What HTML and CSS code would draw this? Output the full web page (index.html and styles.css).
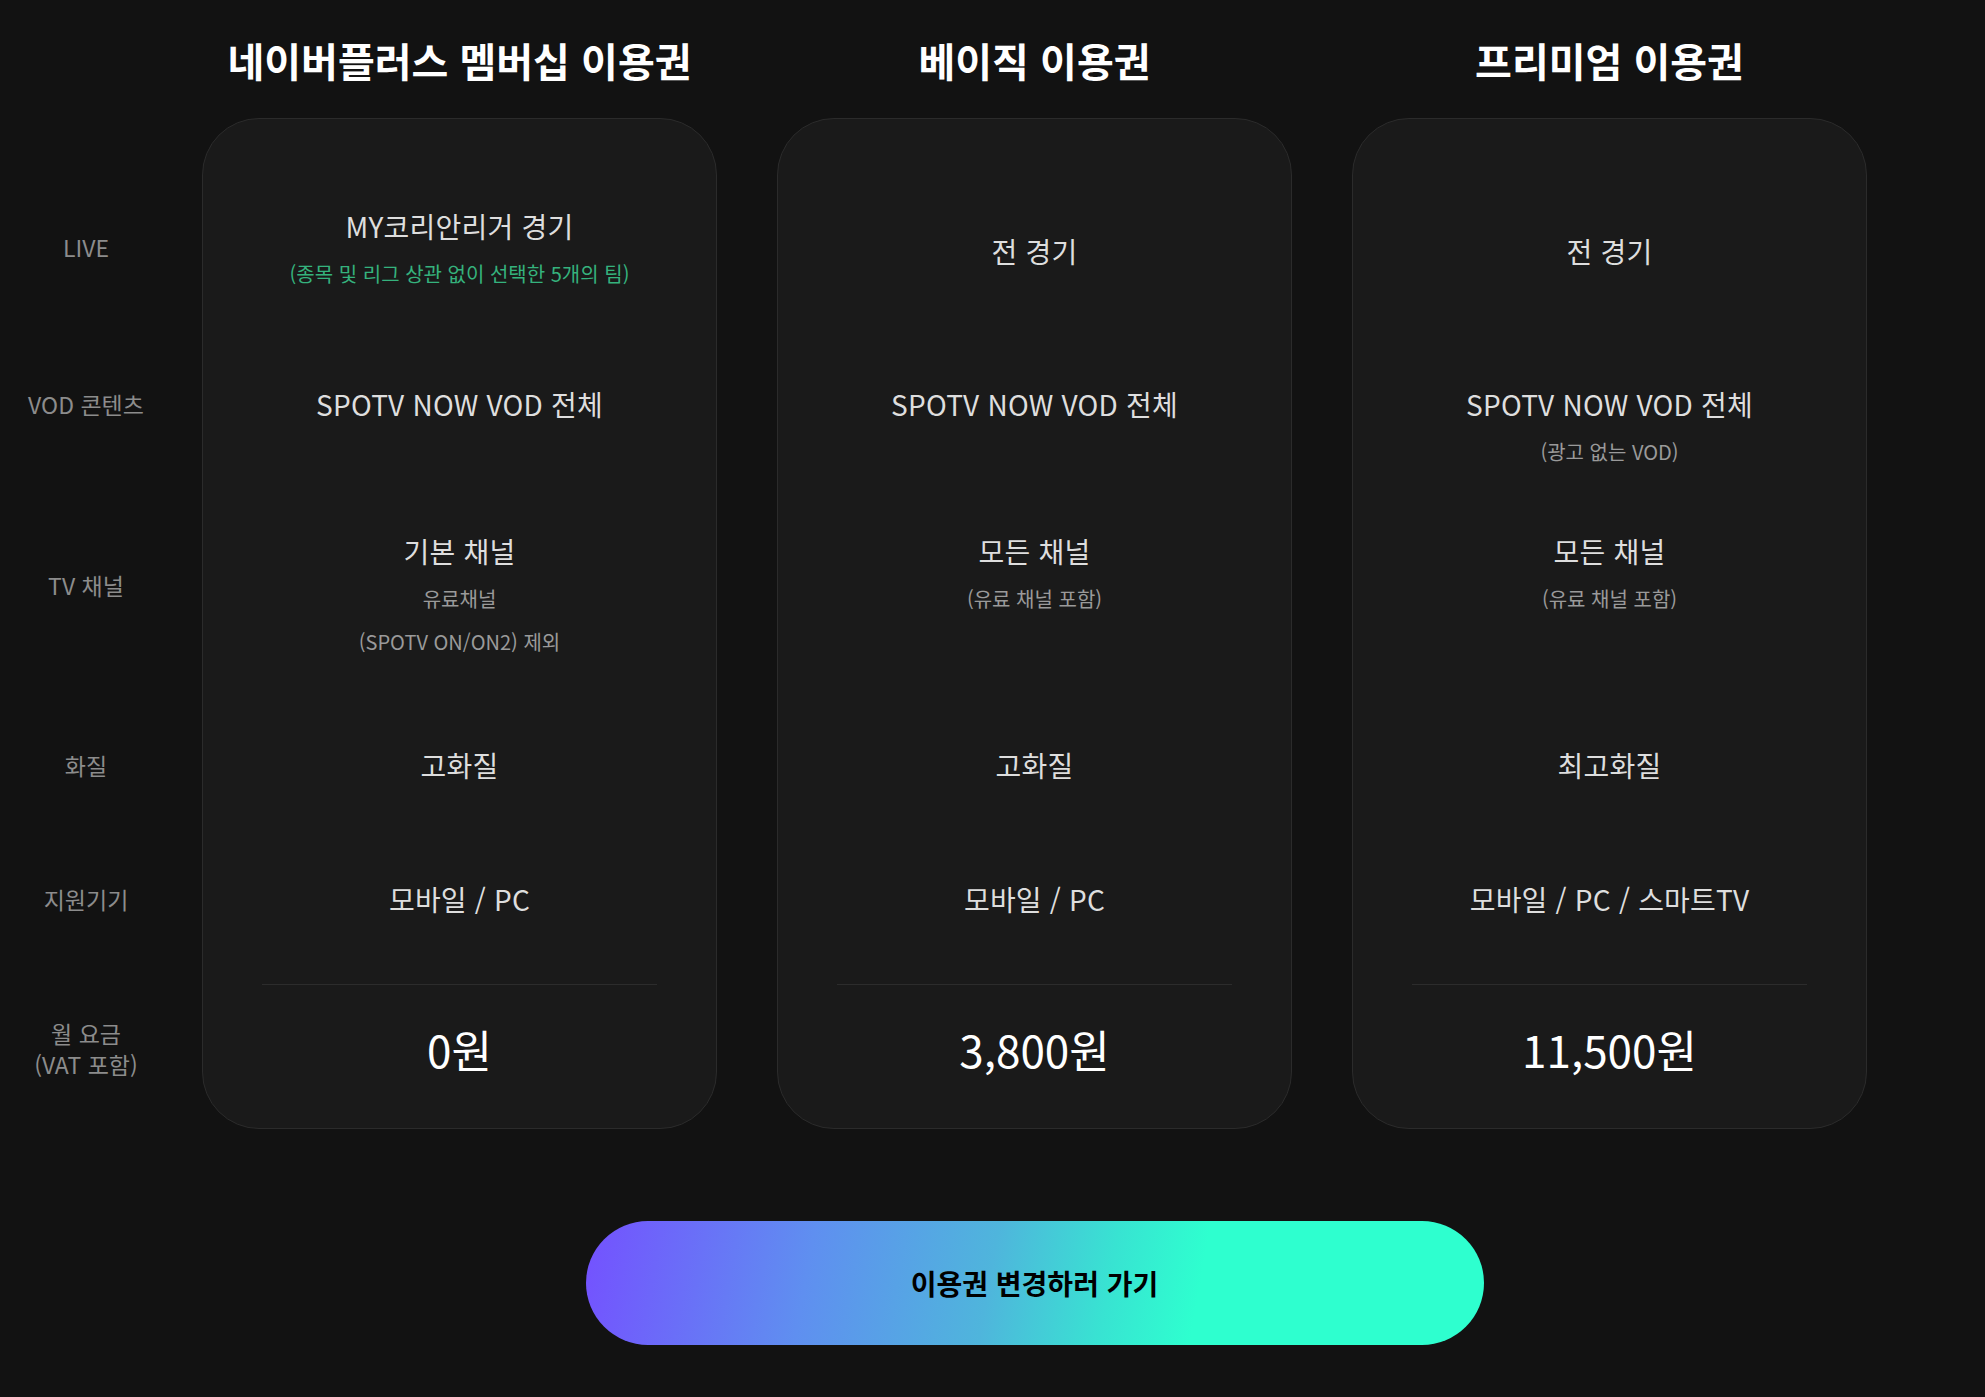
FILE: index.html
```html
<!DOCTYPE html>
<html lang="ko">
<head>
    <meta charset="UTF-8">
    <meta name="viewport" content="width=device-width, initial-scale=1.0">
    <title>이용권 비교</title>
    <link rel="stylesheet" href="styles.css">
</head>
<body>
    <div class="page">
        <div class="compare">
            <!-- 항목 이름 -->
            <div class="labels">
                <div class="row row-live">LIVE</div>
                <div class="row row-vod">VOD 콘텐츠</div>
                <div class="row row-tv">TV 채널</div>
                <div class="row row-quality">화질</div>
                <div class="row row-device">지원기기</div>
                <div class="divider-space"></div>
                <div class="row row-price price-label">월 요금<br>(VAT 포함)</div>
            </div>

            <div class="plans">
                <div class="plan">
                    <h2 class="plan-title">네이버플러스 멤버십 이용권</h2>
                    <div class="card">
                        <div class="cell row-live">
                            <p class="main">MY코리안리거 경기</p>
                            <p class="sub green">(종목 및 리그 상관 없이 선택한 5개의 팀)</p>
                        </div>
                        <div class="cell top row-vod">
                            <p class="main">SPOTV NOW VOD 전체</p>
                        </div>
                        <div class="cell top row-tv">
                            <p class="main">기본 채널</p>
                            <p class="sub">유료채널</p>
                            <p class="sub">(SPOTV ON/ON2) 제외</p>
                        </div>
                        <div class="cell row-quality">
                            <p class="main">고화질</p>
                        </div>
                        <div class="cell row-device">
                            <p class="main">모바일 / PC</p>
                        </div>
                        <div class="divider"></div>
                        <div class="cell row-price">
                            <p class="price">0원</p>
                        </div>
                    </div>
                </div>

                <div class="plan">
                    <h2 class="plan-title">베이직 이용권</h2>
                    <div class="card">
                        <div class="cell row-live">
                            <p class="main single">전 경기</p>
                        </div>
                        <div class="cell top row-vod">
                            <p class="main">SPOTV NOW VOD 전체</p>
                        </div>
                        <div class="cell top row-tv">
                            <p class="main">모든 채널</p>
                            <p class="sub">(유료 채널 포함)</p>
                        </div>
                        <div class="cell row-quality">
                            <p class="main">고화질</p>
                        </div>
                        <div class="cell row-device">
                            <p class="main">모바일 / PC</p>
                        </div>
                        <div class="divider"></div>
                        <div class="cell row-price">
                            <p class="price">3,800원</p>
                        </div>
                    </div>
                </div>

                <div class="plan">
                    <h2 class="plan-title">프리미엄 이용권</h2>
                    <div class="card">
                        <div class="cell row-live">
                            <p class="main single">전 경기</p>
                        </div>
                        <div class="cell top row-vod">
                            <p class="main">SPOTV NOW VOD 전체</p>
                            <p class="sub">(광고 없는 VOD)</p>
                        </div>
                        <div class="cell top row-tv">
                            <p class="main">모든 채널</p>
                            <p class="sub">(유료 채널 포함)</p>
                        </div>
                        <div class="cell row-quality">
                            <p class="main">최고화질</p>
                        </div>
                        <div class="cell row-device">
                            <p class="main">모바일 / PC / 스마트TV</p>
                        </div>
                        <div class="divider"></div>
                        <div class="cell row-price">
                            <p class="price">11,500원</p>
                        </div>
                    </div>
                </div>
            </div>
        </div>

        <div class="action">
            <button class="change-button">이용권 변경하러 가기</button>
        </div>
    </div>
</body>
</html>
```

FILE: styles.css
```css
* {
    margin: 0;
    padding: 0;
    box-sizing: border-box;
    font-family: "Noto Sans CJK KR", "Noto Sans", sans-serif;
}

body {
    background-color: #121212;
    color: #dcdcdc;
    min-height: 100vh;
}

.page {
    padding-top: 36px;
}

.compare {
    display: flex;
}

/* 왼쪽 항목 이름 */
.labels {
    width: 172px;
    margin-right: 30px;
    padding-top: 142px;
    display: flex;
    flex-direction: column;
    color: #8c8c8c;
    font-size: 23px;
    line-height: 29px;
}

.labels .row {
    display: flex;
    align-items: center;
    justify-content: center;
    text-align: center;
}

.labels .price-label {
    line-height: 31px;
}

.divider-space {
    height: 39px;
}

/* 공통 행 높이 */
.row-live { height: 138px; }
.row-vod { height: 176px; }
.row-tv { height: 186px; }
.row-quality { height: 174px; }
.row-device { height: 94px; }
.row-price { height: 128px; }

.plans {
    display: flex;
    gap: 60px;
}

.plan {
    width: 515px;
}

.plan-title {
    font-size: 40px;
    line-height: 49px;
    font-weight: 700;
    color: #fff;
    text-align: center;
    margin-bottom: 33px;
}

.card {
    background-color: #1a1a1a;
    border: 1px solid #2b2b2b;
    border-radius: 57px;
    padding: 59px 0 15px;
}

.cell {
    display: flex;
    flex-direction: column;
    align-items: center;
    justify-content: center;
    text-align: center;
}

.cell.top {
    justify-content: flex-start;
}

.row-vod.top {
    padding-top: 70px;
}

.row-tv.top {
    padding-top: 41px;
}

.main {
    font-size: 28px;
    line-height: 36px;
    color: #dedede;
    letter-spacing: 0.2px;
}

.main.single {
    margin-top: 8px;
}

.sub {
    font-size: 20px;
    line-height: 26px;
    margin-top: 17px;
    color: #9a9a9a;
}

.sub + .sub {
    margin-top: 17px;
}

.green {
    color: #35b27d;
}

.divider {
    height: 1px;
    margin: 38px 59px 0;
    background-color: #2c2c2c;
}

.price {
    font-size: 44px;
    line-height: 52px;
    color: #fff;
}

/* 하단 버튼 */
.action {
    margin-left: 202px;
    width: 1665px;
    display: flex;
    justify-content: center;
    padding-top: 92px;
}

.change-button {
    width: 898px;
    height: 124px;
    border: none;
    border-radius: 62px;
    background: linear-gradient(100deg, #7451ff 0%, #5f8ff0 25%, #4fb5dc 45%, #38e3d2 58%, #2effcf 68%, #2effcf 100%);
    color: #000;
    font-size: 28px;
    font-weight: 700;
    cursor: pointer;
}
```
